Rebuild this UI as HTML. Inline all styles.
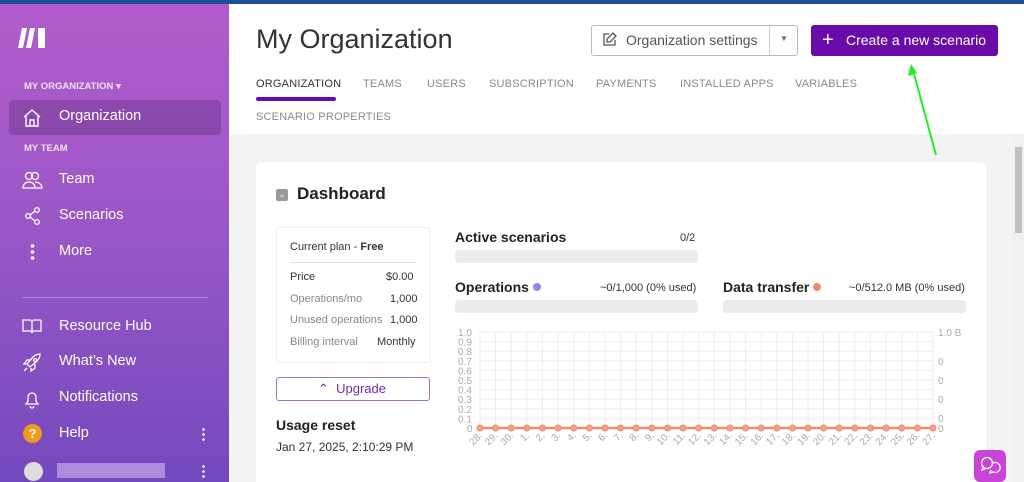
<!DOCTYPE html>
<html style="width:1024px;height:482px;overflow:hidden"><head><meta charset="utf-8"><style>
*{box-sizing:border-box;margin:0;padding:0}
body{width:1024px;height:482px;overflow:hidden;font-family:"Liberation Sans",sans-serif;background:#f3f3f5;position:relative}
.a{position:absolute}
#top{left:0;top:0;width:1024px;height:4px;background:#1c4f96}
#side{left:0;top:4px;width:229px;height:478px;background:linear-gradient(180deg,#b35ccb 0%,#9856c6 50%,#7349bd 100%);color:#fff}
.sl{position:absolute;left:59px;font-size:14.5px;color:#fff}
.ic{position:absolute;left:22px}
.cap{position:absolute;left:24px;font-size:9.5px;font-weight:bold;color:#f0e2f6}
#hdr{left:229px;top:4px;width:795px;height:130px;background:#fff}
.tab{position:absolute;font-size:11px;color:#8a8a8a;letter-spacing:.2px}
#card{left:256px;top:162px;width:730px;height:320px;background:#fff;border-radius:6px 6px 0 0}
.t{font-size:11px;color:#333}
.g{color:#888}
.bar{position:absolute;height:13px;background:#ececee;border-radius:4px}
</style></head><body>
<div id="top" class="a"></div>
<div id="side" class="a">
 <svg class="a" style="left:18px;top:23px" width="30" height="22" viewBox="0 0 30 22"><path d="M4 1h5L5 21H0z M12 1h5l-4 20H8z M20 1h7v20h-7z" fill="#fff"/></svg>
 <div class="cap" style="top:77px">MY ORGANIZATION ▾</div>
 <div class="a" style="left:9px;top:96px;width:212px;height:35px;background:rgba(90,40,120,.35);border-radius:4px"></div>
 <svg class="ic" style="top:105px" width="20" height="18" viewBox="0 0 20 18" fill="none" stroke="#fff" stroke-width="1.4"><path d="M2 8L10 1l8 7M4 6v11h12V6M8 17v-6h4v6"/></svg>
 <div class="sl" style="top:104px">Organization</div>
 <div class="cap" style="top:139px">MY TEAM</div>
 <svg class="ic" style="top:167px" width="21" height="18" viewBox="0 0 21 18" fill="none" stroke="#fff" stroke-width="1.3"><circle cx="7" cy="5" r="3.5"/><circle cx="13" cy="5" r="3.5"/><path d="M1 17c0-4 3-6 6-6s6 2 6 6zM13 11c3 0 7 2 7 6h-7"/></svg>
 <div class="sl" style="top:167px">Team</div>
 <svg class="ic" style="top:203px;left:25px" width="16" height="18" viewBox="0 0 16 18" fill="none" stroke="#fff" stroke-width="1.3"><circle cx="3" cy="9" r="2.3"/><circle cx="12" cy="3" r="2.3"/><circle cx="12" cy="15" r="2.3"/><path d="M5 8l5-4M5 10l5 4"/></svg>
 <div class="sl" style="top:203px">Scenarios</div>
 <svg class="ic" style="top:240px;left:30px" width="5" height="16"><circle cx="2.5" cy="2" r="1.8" fill="#fff"/><circle cx="2.5" cy="8" r="1.8" fill="#fff"/><circle cx="2.5" cy="14" r="1.8" fill="#fff"/></svg>
 <div class="sl" style="top:239px">More</div>
 <div class="a" style="left:22px;top:293px;width:186px;height:1px;background:rgba(255,255,255,.3)"></div>
 <svg class="ic" style="top:314px" width="20" height="16" viewBox="0 0 20 16" fill="none" stroke="#fff" stroke-width="1.3"><path d="M1 2h7c1 0 2 1 2 2v11c0-1-1-2-2-2H1zM19 2h-7c-1 0-2 1-2 2M19 2v11h-7c-1 0-2 1-2 2"/></svg>
 <div class="sl" style="top:314px">Resource Hub</div>
 <svg class="ic" style="top:349px" width="20" height="20" viewBox="0 0 20 20" fill="none" stroke="#fff" stroke-width="1.3"><path d="M7 13l-2-2 6-7c2-2 5-3 7-3 0 2-1 5-3 7l-7 6zM5 11l-3 0 3-4h4M9 15v3l4-3v-4M5 15l-3 3"/><circle cx="13" cy="7" r="1.5"/></svg>
 <div class="sl" style="top:349px">What’s New</div>
 <svg class="ic" style="top:385px" width="20" height="20" viewBox="0 0 20 20" fill="none" stroke="#fff" stroke-width="1.3"><path d="M4 15h12l-2-3V8a4 4 0 0 0-8 0v4zM8 17a2 2 0 0 0 4 0"/></svg>
 <div class="sl" style="top:385px">Notifications</div>
 <div class="a" style="left:23px;top:420px;width:19px;height:19px;border-radius:50%;background:#f29a1e;color:#fff;font-size:13px;font-weight:bold;text-align:center;line-height:19px">?</div>
 <div class="sl" style="top:421px">Help</div>
 <div class="a" style="left:202px;top:423px;width:3px;height:14px;background:radial-gradient(circle,#e8d8f0 1.3px,transparent 1.5px) 0 0/3px 5px"></div>
 <div class="a" style="left:24px;top:458px;width:19px;height:19px;border-radius:50%;background:#ddd"></div>
 <div class="a" style="left:57px;top:459px;width:108px;height:15px;background:#c8a8e8;opacity:.7"></div>
 <div class="a" style="left:202px;top:460px;width:3px;height:14px;background:radial-gradient(circle,#e8d8f0 1.3px,transparent 1.5px) 0 0/3px 5px"></div>
</div>
<div id="hdr" class="a"></div>
<div class="a" style="left:256px;top:24px;font-size:27px;color:#333">My Organization</div>
<div class="a" style="left:591px;top:25px;width:207px;height:31px;border:1px solid #bbb;border-radius:3px;background:#fff"></div>
<div class="a" style="left:769px;top:26px;width:1px;height:29px;background:#ccc"></div>
<svg class="a" style="left:602px;top:32px" width="15" height="15" viewBox="0 0 15 15" fill="none" stroke="#555" stroke-width="1.3"><path d="M7 2H2v11h11V8M11 1l3 3-6 6H5V7z"/></svg>
<div class="a" style="left:626px;top:32px;font-size:14px;color:#555">Organization settings</div>
<div class="a" style="left:780px;top:34px;font-size:8px;color:#666">▼</div>
<div class="a" style="left:811px;top:25px;width:187px;height:31px;background:#6a0aa8;border-radius:3px"></div>
<div class="a" style="left:822px;top:28px;font-size:20px;color:#fff;line-height:24px">+</div>
<div class="a" style="left:846px;top:32px;font-size:14px;color:#fff">Create a new scenario</div>
<div class="tab" style="left:256px;top:78px;color:#333">ORGANIZATION</div>
<div class="a" style="left:256px;top:97px;width:80px;height:4px;background:#6a0aa8;border-radius:2px"></div>
<div class="tab" style="left:363px;top:78px">TEAMS</div>
<div class="tab" style="left:427px;top:78px">USERS</div>
<div class="tab" style="left:489px;top:78px">SUBSCRIPTION</div>
<div class="tab" style="left:596px;top:78px">PAYMENTS</div>
<div class="tab" style="left:680px;top:78px">INSTALLED APPS</div>
<div class="tab" style="left:795px;top:78px">VARIABLES</div>
<div class="tab" style="left:256px;top:111px">SCENARIO PROPERTIES</div>
<svg class="a" style="left:900px;top:62px" width="45" height="96"><path d="M36 93L13 8" stroke="#22ee22" stroke-width="2"/><path d="M11 2l-3 12 9-3z" fill="#22ee22"/></svg>
<div class="a" style="left:1013px;top:134px;width:11px;height:348px;background:#f0f0f0"></div>
<div class="a" style="left:1015px;top:147px;width:7px;height:86px;background:#c1c1c1"></div>
<div id="card" class="a"></div>
<div class="a" style="left:276px;top:189px;width:12px;height:12px;background:#999;border-radius:2px;color:#fff;font-size:8px;text-align:center;line-height:12px">⌄</div>
<div class="a" style="left:297px;top:184px;font-size:17px;font-weight:bold;color:#222">Dashboard</div>
<div class="a" style="left:276px;top:227px;width:154px;height:136px;border:1px solid #eee;border-radius:3px"></div>
<div class="a t" style="left:290px;top:241px">Current plan - <b>Free</b></div>
<div class="a" style="left:290px;top:262px;width:126px;height:1px;background:#e3e3e3"></div>
<div class="a t" style="left:290px;top:271px">Price</div><div class="a t" style="left:386px;top:271px">$0.00</div>
<div class="a t g" style="left:290px;top:293px">Operations/mo</div><div class="a t" style="left:390px;top:293px">1,000</div>
<div class="a t g" style="left:290px;top:314px">Unused operations</div><div class="a t" style="left:390px;top:314px">1,000</div>
<div class="a t g" style="left:290px;top:336px">Billing interval</div><div class="a t" style="left:377px;top:336px">Monthly</div>
<div class="a" style="left:276px;top:377px;width:154px;height:24px;border:1.5px solid #a070c8;border-radius:3px"></div>
<div class="a" style="left:318px;top:381px;font-size:13px;color:#7a2ab0">⌃&nbsp;&nbsp;Upgrade</div>
<div class="a" style="left:276px;top:417px;font-size:14px;font-weight:bold;color:#222">Usage reset</div>
<div class="a" style="left:276px;top:440px;font-size:12px;color:#333">Jan 27, 2025, 2:10:29 PM</div>
<div class="a" style="left:455px;top:229px;font-size:14px;font-weight:bold;color:#222">Active scenarios</div>
<div class="a t" style="left:680px;top:232px">0/2</div>
<div class="bar" style="left:455px;top:250px;width:243px"></div>
<div class="a" style="left:455px;top:279px;font-size:14px;font-weight:bold;color:#222">Operations <span style="display:inline-block;width:8px;height:8px;border-radius:50%;background:#8b8af0;vertical-align:1px"></span></div>
<div class="a t" style="left:600px;top:282px">~0/1,000 (0% used)</div>
<div class="bar" style="left:455px;top:300px;width:243px"></div>
<div class="a" style="left:723px;top:279px;font-size:14px;font-weight:bold;color:#222">Data transfer <span style="display:inline-block;width:8px;height:8px;border-radius:50%;background:#f08a6a;vertical-align:1px"></span></div>
<div class="a t" style="left:849px;top:282px">~0/512.0 MB (0% used)</div>
<div class="bar" style="left:723px;top:300px;width:243px"></div>
<svg class="a" style="left:440px;top:320px" width="560" height="140" font-family="Liberation Sans" font-size="10" fill="#aaa">
<g stroke="#eee" stroke-width="1">
<line x1="40" y1="12" x2="493" y2="12"/><line x1="40" y1="21.6" x2="493" y2="21.6"/><line x1="40" y1="31.2" x2="493" y2="31.2"/><line x1="40" y1="40.8" x2="493" y2="40.8"/><line x1="40" y1="50.4" x2="493" y2="50.4"/><line x1="40" y1="60" x2="493" y2="60"/><line x1="40" y1="69.6" x2="493" y2="69.6"/><line x1="40" y1="79.2" x2="493" y2="79.2"/><line x1="40" y1="88.8" x2="493" y2="88.8"/><line x1="40" y1="98.4" x2="493" y2="98.4"/>
</g>
<g id="vg" stroke="#eee"></g>
<text x="18" y="16">1.0</text><text x="18" y="25.6">0.9</text><text x="18" y="35.2">0.8</text><text x="18" y="44.8">0.7</text><text x="18" y="54.4">0.6</text><text x="18" y="64">0.5</text><text x="18" y="73.6">0.4</text><text x="18" y="83.2">0.3</text><text x="18" y="92.8">0.2</text><text x="18" y="102.4">0.1</text><text x="27" y="112">0</text>
<text x="498" y="16">1.0 B</text><text x="498" y="45">0</text><text x="498" y="64">0</text><text x="498" y="83">0</text><text x="498" y="102">0</text><text x="498" y="112">0</text>
<line x1="40" y1="108" x2="493" y2="108" stroke="#f08a70" stroke-width="2.5"/>
<g id="pts"></g>
</svg>
<script>
var vg=document.getElementById('vg'),p=document.getElementById('pts'),ns='http://www.w3.org/2000/svg';
var labs=['28','29','30','1','2','3','4','5','6','7','8','9','10','11','12','13','14','15','16','17','18','19','20','21','22','23','24','25','26','27'];
for(var i=0;i<30;i++){var x=40+i*453/29;
var l=document.createElementNS(ns,'line');l.setAttribute('x1',x);l.setAttribute('x2',x);l.setAttribute('y1',12);l.setAttribute('y2',108);vg.appendChild(l);
var c=document.createElementNS(ns,'circle');c.setAttribute('cx',x);c.setAttribute('cy',108);c.setAttribute('r',3);c.setAttribute('fill','#f4a090');c.setAttribute('stroke','#f08a70');p.appendChild(c);
var t=document.createElementNS(ns,'text');t.setAttribute('transform','translate('+(x+3)+',116) rotate(-45)');t.setAttribute('text-anchor','end');t.textContent=labs[i]+'.';p.appendChild(t);}
</script>
<div class="a" style="left:974px;top:450px;width:32px;height:32px;background:#c845d8;border-radius:6px"></div>
<svg class="a" style="left:980px;top:456px" width="22" height="18" viewBox="0 0 22 18" fill="none" stroke="#fff" stroke-width="1.3"><circle cx="7" cy="7" r="5.5"/><path d="M3 11l-1 3 3-1M13 7a5 5 0 1 1 0 9l-3 1 1-3"/></svg>
</body></html>
